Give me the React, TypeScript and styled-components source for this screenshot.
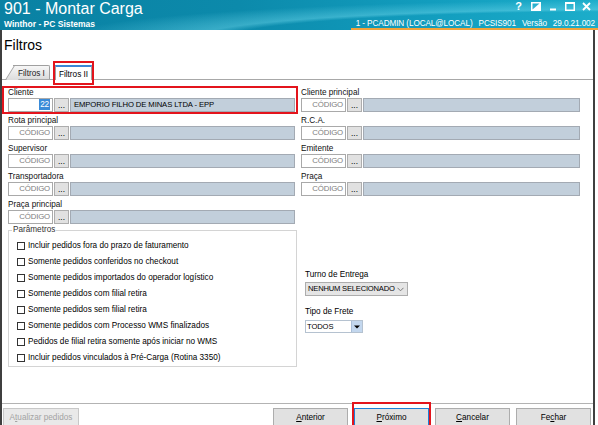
import styled, { createGlobalStyle } from 'styled-components';

const font = `'Liberation Sans', Arial, sans-serif`;

const GlobalStyle = createGlobalStyle`
  html, body {
    margin: 0;
    padding: 0;
    background: #ffffff;
  }
  body {
    font-family: ${font};
    font-size: 8.2px;
    color: #000000;
  }
  * {
    box-sizing: border-box;
  }
`;

type Side = 'left' | 'right';

interface ILookup {
  label: string;
  code?: string;
  description?: string;
  highlight?: boolean;
}

const leftLookups: ILookup[] = [
  { label: 'Cliente', code: '22', description: 'EMPORIO FILHO DE MINAS LTDA - EPP', highlight: true },
  { label: 'Rota principal' },
  { label: 'Supervisor' },
  { label: 'Transportadora' },
  { label: 'Praça principal' },
];

const rightLookups: ILookup[] = [
  { label: 'Cliente principal' },
  { label: 'R.C.A.' },
  { label: 'Emitente' },
  { label: 'Praça' },
];

const parametros = [
  'Incluir pedidos fora do prazo de faturamento',
  'Somente pedidos conferidos no checkout',
  'Somente pedidos importados do operador logístico',
  'Somente pedidos com filial retira',
  'Somente pedidos sem filial retira',
  'Somente pedidos com Processo WMS finalizados',
  'Pedidos de filial retira somente após iniciar no WMS',
  'Incluir pedidos vinculados à Pré-Carga (Rotina 3350)',
];

const LookupRow = ({ label, code, description, highlight, side }: ILookup & { side: Side }) => (
  <Row $side={side} $highlight={highlight}>
    <Label>{label}</Label>
    <Fields>
      <CodeBox $filled={!!code}>{code ? <Selected>{code}</Selected> : 'CÓDIGO'}</CodeBox>
      <DotsButton>...</DotsButton>
      <Description>{description}</Description>
    </Fields>
  </Row>
);

const App = () => {
  return (
    <Window>
      <GlobalStyle />
      <TitleBar>
        <TitleLeft>
          <Title>901 - Montar Carga</Title>
          <Subtitle>Winthor - PC Sistemas</Subtitle>
        </TitleLeft>
        <TitleRight>
          <Controls>
            <Control>
              <HelpMark>?</HelpMark>
            </Control>
            <Control>
              <svg width="10" height="9" viewBox="0 0 10 9">
                <rect x="0.75" y="0.75" width="8.5" height="7.5" fill="none" stroke="#fff" strokeWidth="1.5" />
                <polygon points="9,1 9,8 1,8" fill="#fff" />
              </svg>
            </Control>
            <Control>
              <svg width="6" height="9" viewBox="0 0 6 9">
                <rect x="0" y="6.5" width="6" height="2" fill="#fff" />
              </svg>
            </Control>
            <Control>
              <svg width="10" height="9" viewBox="0 0 10 9">
                <rect x="0.75" y="0.75" width="8.5" height="7.5" fill="none" stroke="#fff" strokeWidth="1.5" />
                <rect x="0" y="0" width="10" height="2" fill="#fff" />
              </svg>
            </Control>
            <Control>
              <svg width="9" height="9" viewBox="0 0 9 9">
                <path d="M1 1 L8 8 M8 1 L1 8" stroke="#fff" strokeWidth="1.8" />
              </svg>
            </Control>
          </Controls>
          <Status>
            <span>1 - PCADMIN (LOCAL@LOCAL)</span>
            <span>PCSIS901</span>
            <span>Versão</span>
            <span>29.0.21.002</span>
          </Status>
        </TitleRight>
      </TitleBar>

      <Frame>
        <Heading>Filtros</Heading>
        <TabStrip>
          <SlantTab>
            <TabText>Filtros I</TabText>
          </SlantTab>
          <ActiveTab $marked>Filtros II</ActiveTab>
        </TabStrip>

        <TabPage>
          <Column>
            {leftLookups.map((item) => (
              <LookupRow key={item.label} side="left" {...item} />
            ))}
            <Group>
              <Legend>Parâmetros</Legend>
              {parametros.map((text) => (
                <CheckRow key={text}>
                  <CheckBox />
                  <span>{text}</span>
                </CheckRow>
              ))}
            </Group>
          </Column>

          <Column>
            {rightLookups.map((item) => (
              <LookupRow key={item.label} side="right" {...item} />
            ))}
            <Options>
              <OptionLabel>Turno de Entrega</OptionLabel>
              <FlatSelect>
                <span>NENHUM SELECIONADO</span>
                <svg width="7" height="5" viewBox="0 0 7 5">
                  <path d="M0.5 0.8 L3.5 3.8 L6.5 0.8" fill="none" stroke="#7a7a7a" strokeWidth="1" />
                </svg>
              </FlatSelect>
              <OptionLabel $gap>Tipo de Frete</OptionLabel>
              <ComboSelect>
                <span>TODOS</span>
                <ComboButton>
                  <svg width="6" height="4" viewBox="0 0 6 4">
                    <polygon points="0,0.5 6,0.5 3,3.5" fill="#000" />
                  </svg>
                </ComboButton>
              </ComboSelect>
            </Options>
          </Column>
        </TabPage>

        <Footer>
          <Button $disabled>
            A<u>t</u>ualizar pedidos
          </Button>
          <NavButtons>
            <Button>
              <u>A</u>nterior
            </Button>
            <Button $focused $marked>
              <u>P</u>róximo
            </Button>
            <Button>
              <u>C</u>ancelar
            </Button>
            <Button>
              Fe<u>c</u>har
            </Button>
          </NavButtons>
        </Footer>
      </Frame>
    </Window>
  );
};

const Window = styled.div`
  width: 598px;
  height: 425px;
  overflow: hidden;
  display: flex;
  flex-direction: column;
  background: #ffffff;
`;

const TitleBar = styled.header`
  flex: none;
  height: 30px;
  display: flex;
  justify-content: space-between;
  color: #ffffff;
  background:
    radial-gradient(140% 190% at 105% 130%, rgba(80, 200, 225, 0) 48%, rgba(110, 215, 235, 0.45) 52%, rgba(110, 215, 235, 0) 68%),
    linear-gradient(90deg, #0a81a3 0%, #0c8aab 40%, #129dbe 72%, #1cadca 100%);
`;

const TitleLeft = styled.div`
  padding: 1px 0 0 4px;
`;

const Title = styled.div`
  font: 16px/16px ${font};
`;

const Subtitle = styled.div`
  margin-top: 2px;
  font: bold 8.5px/10px ${font};
`;

const TitleRight = styled.div`
  width: 247px;
  display: flex;
  flex-direction: column;
`;

const Controls = styled.div`
  height: 19px;
  display: flex;
  justify-content: flex-end;
  padding-right: 3px;
`;

const Control = styled.div`
  width: 17px;
  height: 12px;
  display: flex;
  align-items: center;
  justify-content: center;
`;

const HelpMark = styled.span`
  font: bold 11px/12px ${font};
`;

const Status = styled.div`
  height: 11px;
  display: flex;
  justify-content: flex-end;
  gap: 6px;
  padding-right: 3px;
  font: 8.2px/9px ${font};
  letter-spacing: -0.1px;
  white-space: nowrap;
  border-bottom: 2px solid #f0a33c;
`;

const Frame = styled.main`
  flex: 1;
  width: 595px;
  display: flex;
  flex-direction: column;
  border-left: 2px solid #3f3f3f;
  border-right: 2px solid #3f3f3f;
`;

const Heading = styled.h1`
  margin: 0;
  height: 30px;
  padding: 7px 0 0 2px;
  font: normal 14px/16px ${font};
`;

const TabStrip = styled.div`
  height: 20px;
  display: flex;
  align-items: flex-end;
  padding-left: 11px;
  border-bottom: 1px solid #a8a8a8;
`;

const SlantTab = styled.div`
  position: relative;
  width: 37px;
  height: 14px;
  padding-top: 2px;
  font: 8.2px/12px ${font};
  color: #222;
  background: linear-gradient(180deg, #f7f7f7, #dcdcdc);
  border-top: 1px solid #a0a0a0;
  border-right: 1px solid #a0a0a0;
  border-top-right-radius: 2px;

  &::before {
    content: '';
    position: absolute;
    left: -8px;
    top: -1px;
    width: 12px;
    height: 14px;
    background: linear-gradient(180deg, #f7f7f7, #dcdcdc);
    border-top: 1px solid #a0a0a0;
    border-left: 1px solid #a0a0a0;
    transform: skewX(-32deg);
    transform-origin: bottom left;
  }
`;

const TabText = styled.span`
  position: relative;
  display: block;
  margin-left: 5px;
  white-space: nowrap;
`;

const ActiveTab = styled.div<{ $marked?: boolean }>`
  position: relative;
  width: 37px;
  height: 15px;
  margin: 0 0 -1px 5px;
  padding-top: 2px;
  text-align: center;
  font: 8.2px/12px ${font};
  white-space: nowrap;
  background: #ffffff;
  border-top: 2px solid #3b86d6;
  border-left: 1px solid #a0a0a0;
  border-right: 1px solid #a0a0a0;

  &::after {
    content: '';
    display: ${(p) => (p.$marked ? 'block' : 'none')};
    position: absolute;
    left: -3px;
    right: -3px;
    top: -6px;
    bottom: -5px;
    border: 2px solid #e3141c;
  }
`;

const TabPage = styled.div`
  flex: 1;
  display: grid;
  grid-template-columns: 296px 1fr;
  align-items: start;
  padding-top: 6px;
  border-bottom: 1px solid #b3b3b3;
`;

const Column = styled.div`
  display: flex;
  flex-direction: column;
`;

const Row = styled.div<{ $side: Side; $highlight?: boolean }>`
  height: 28px;
  padding: ${(p) => (p.$side === 'left' ? '0 1px 0 4px' : '0 11px 0 1px')};
  border: 2px solid ${(p) => (p.$highlight ? '#e3141c' : 'transparent')};
`;

const Label = styled.div`
  height: 10px;
  font: 8.2px/10px ${font};
  color: #111;
`;

const Fields = styled.div`
  height: 14px;
  display: flex;
  gap: 1px;
`;

const CodeBox = styled.div<{ $filled: boolean }>`
  width: 45px;
  padding-right: 2px;
  text-align: right;
  font: 7.8px/12px ${font};
  letter-spacing: -0.15px;
  color: ${(p) => (p.$filled ? '#000' : '#7d7d7d')};
  background: #ffffff;
  border: 1px solid #a9a9a9;
`;

const Selected = styled.span`
  padding: 1px 1px;
  font-size: 8.2px;
  color: #ffffff;
  background: #3a8bd8;
`;

const DotsButton = styled.div`
  width: 15px;
  text-align: center;
  font: 8.2px/14px ${font};
  background: #e1e1e1;
  border: 1px solid #adadad;
`;

const Description = styled.div`
  flex: 1;
  padding-left: 3px;
  font: 7.7px/12px ${font};
  letter-spacing: -0.1px;
  white-space: nowrap;
  background: #c2cfdb;
  border: 1px solid #a3aab3;
`;

const Group = styled.fieldset`
  min-width: 0;
  margin: 0 1px 0 6px;
  padding: 4px 8px 0 8px;
  border: 1px solid #d4d4d4;
`;

const Legend = styled.legend`
  margin-left: -5px;
  padding: 0 1px;
  font: 8.2px/8px ${font};
  color: #333;
`;

const CheckRow = styled.div`
  height: 16px;
  display: flex;
  align-items: center;
  gap: 3px;
  font: 8.2px/10px ${font};
  white-space: nowrap;
`;

const CheckBox = styled.span`
  width: 8px;
  height: 8px;
  flex: none;
  background: #ffffff;
  border: 1px solid #333333;
`;

const Options = styled.div`
  margin-top: 72px;
  padding-left: 7px;
  display: flex;
  flex-direction: column;
  align-items: flex-start;
`;

const OptionLabel = styled.div<{ $gap?: boolean }>`
  height: 10px;
  margin-top: ${(p) => (p.$gap ? '11px' : '0')};
  margin-bottom: ${(p) => (p.$gap ? '3px' : '2px')};
  font: 8.2px/10px ${font};
`;

const FlatSelect = styled.div`
  width: 103px;
  height: 14px;
  display: flex;
  align-items: center;
  justify-content: space-between;
  padding: 0 3px 0 2px;
  font: 7.6px/12px ${font};
  letter-spacing: -0.2px;
  white-space: nowrap;
  background: #e5e5e5;
  border: 1px solid #adadad;
`;

const ComboSelect = styled.div`
  width: 58px;
  height: 13px;
  display: flex;
  align-items: stretch;
  padding-left: 1px;
  font: 7.6px/11px ${font};
  letter-spacing: -0.1px;
  background: #ffffff;
  border: 1px solid #b5c2d0;

  & > span {
    flex: 1;
  }
`;

const ComboButton = styled.div`
  width: 11px;
  display: flex;
  align-items: center;
  justify-content: center;
  background: #c3d7ee;
  border-left: 1px solid #a9bed8;
`;

const Footer = styled.footer`
  height: 21px;
  flex: none;
  display: flex;
  justify-content: space-between;
  padding: 4px 2px 0 1px;
`;

const NavButtons = styled.div`
  display: flex;
  gap: 6px;
`;

const Button = styled.div<{ $disabled?: boolean; $focused?: boolean; $marked?: boolean }>`
  position: relative;
  width: ${(p) => (p.$disabled ? '76px' : '75px')};
  height: 20px;
  text-align: center;
  font: 8.2px/18px ${font};
  color: ${(p) => (p.$disabled ? '#a3a3a3' : '#000')};
  background: ${(p) => (p.$disabled ? '#e9e9e9' : '#e1e1e1')};
  border: 1px solid ${(p) => (p.$focused ? '#1f7fd6' : p.$disabled ? '#c8c8c8' : '#adadad')};

  & u {
    text-decoration-thickness: 1px;
  }

  &::after {
    content: '';
    display: ${(p) => (p.$marked ? 'block' : 'none')};
    position: absolute;
    inset: -7px -3px -3px -3px;
    border: 2px solid #e3141c;
  }
`;

export default App;
